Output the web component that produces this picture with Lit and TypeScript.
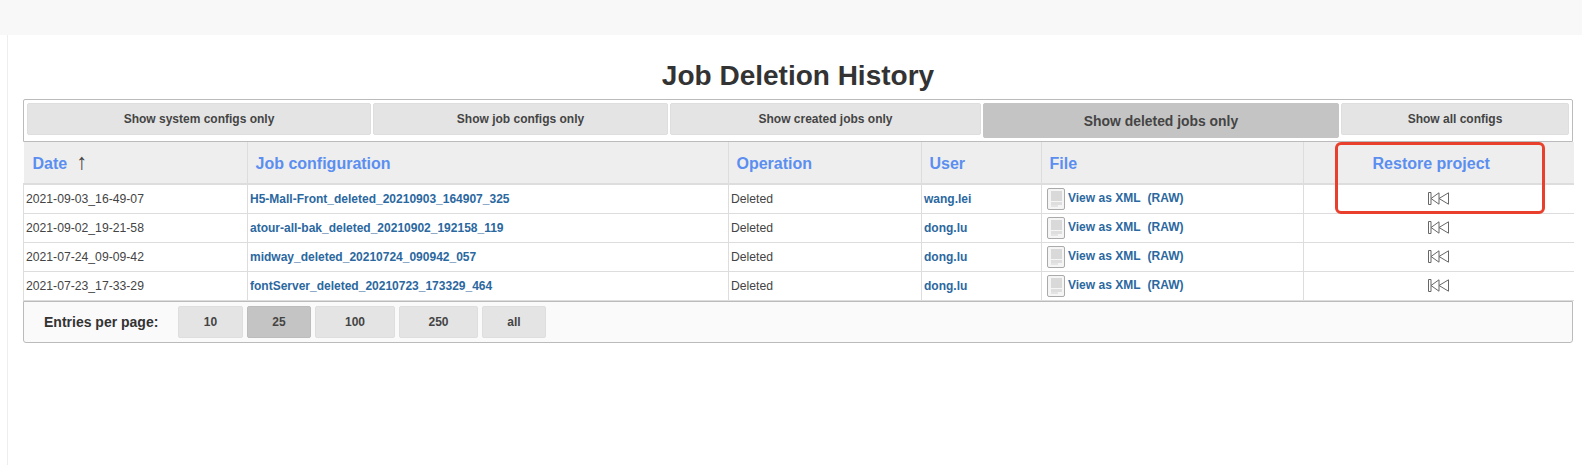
import {LitElement, html, css} from 'lit';
import {customElement} from 'lit/decorators.js';

const FILTERS = [
  {label: 'Show system configs only', width: 344},
  {label: 'Show job configs only', width: 295},
  {label: 'Show created jobs only', width: 311},
  {label: 'Show deleted jobs only', width: 356, active: true},
  {label: 'Show all configs', width: 228}
];

const COLUMNS = [224, 481, 193, 120, 262, 270];

const ROWS = [
  {date: '2021-09-03_16-49-07', job: 'H5-Mall-Front_deleted_20210903_164907_325', user: 'wang.lei'},
  {date: '2021-09-02_19-21-58', job: 'atour-all-bak_deleted_20210902_192158_119', user: 'dong.lu'},
  {date: '2021-07-24_09-09-42', job: 'midway_deleted_20210724_090942_057', user: 'dong.lu'},
  {date: '2021-07-23_17-33-29', job: 'fontServer_deleted_20210723_173329_464', user: 'dong.lu'}
];

const PAGES = [
  {label: '10', width: 65},
  {label: '25', width: 64, active: true},
  {label: '100', width: 80},
  {label: '250', width: 79},
  {label: 'all', width: 64}
];

@customElement('app-root')
export class AppRoot extends LitElement {
  static styles = css`
    :host {
      display: block;
      height: 465px;
      overflow: hidden;
      background: #fff;
      color: #333;
      font-family: "Liberation Sans", Arial, sans-serif;
    }

    .topbar {
      height: 35px;
      background: #f8f8f8;
    }

    .page {
      height: 430px;
      margin-left: 7px;
      padding: 25px 0 0 15px;
      box-sizing: border-box;
      border-left: 1px solid #eee;
    }

    .wrap {
      position: relative;
      width: 1550px;
    }

    h1 {
      margin: 0 0 7px;
      height: 32px;
      font-size: 28px;
      line-height: 32px;
      font-weight: bold;
      text-align: center;
      color: #333;
    }

    .filters {
      display: flex;
      align-items: flex-start;
      gap: 2px;
      height: 43px;
      box-sizing: border-box;
      padding: 3px;
      border: 1px solid #bbb;
      border-radius: 2px 2px 0 0;
    }

    .btn {
      box-sizing: border-box;
      height: 32px;
      line-height: 30px;
      text-align: center;
      font-size: 12px;
      font-weight: bold;
      color: #444;
      background: #e4e4e4;
      border: 1px solid #dedede;
      border-radius: 2px;
    }

    .btn.active {
      background: #c4c4c4;
      border-color: #bcbcbc;
    }

    .filters .btn.active {
      height: 35px;
      line-height: 34px;
      font-size: 13.9px;
      border-color: #c4c4c4;
    }

    table {
      table-layout: fixed;
      width: 1550px;
      border-collapse: collapse;
      font-size: 12.2px;
    }

    th {
      height: 42px;
      padding: 2px 0 0 7.5px;
      box-sizing: border-box;
      text-align: left;
      font-size: 16px;
      font-weight: bold;
      color: #5b8ef0;
      background: #eee;
      border-left: 1px solid #ddd;
      border-bottom: 2px solid #ddd;
    }

    th:first-child {
      border-left: 0;
      padding-left: 9px;
    }

    th.center {
      text-align: center;
      padding: 2px 15px 0 0;
    }

    .arrow {
      margin-left: 9px;
      color: #444;
      font-weight: normal;
      font-size: 22px;
      line-height: 0;
    }

    td {
      height: 29px;
      padding: 0 0 0 2px;
      box-sizing: border-box;
      border: 1px solid #ddd;
      border-top: 0;
      color: #444;
      white-space: nowrap;
    }

    td:last-child {
      border-right: 0;
    }

    a {
      color: #2b68a0;
      font-size: 12px;
      font-weight: bold;
      text-decoration: none;
    }

    .file {
      display: flex;
      align-items: center;
      gap: 3px;
      padding-left: 3px;
    }

    .file a {
      margin-top: -2px;
    }

    .file a.raw {
      margin-left: 4px;
    }

    .file svg {
      display: block;
    }

    td.restore {
      padding: 0 0 2px;
      text-align: center;
    }

    .restore svg {
      display: inline-block;
      vertical-align: middle;
    }

    .pager {
      display: flex;
      align-items: center;
      gap: 4px;
      height: 42px;
      box-sizing: border-box;
      padding: 0 0 0 20px;
      background: #fafafa;
      border: 1px solid #bbb;
      border-radius: 0 0 3px 3px;
    }

    .pager .label {
      width: 130px;
      font-size: 14px;
      font-weight: bold;
      color: #333;
    }

    .highlight {
      position: absolute;
      left: 1312px;
      top: 82px;
      width: 210px;
      height: 72px;
      box-sizing: border-box;
      border: 3px solid #e8402c;
      border-radius: 6px;
      pointer-events: none;
    }
  `;

  fileIcon() {
    return html`<svg width="18" height="22" viewBox="0 0 18 22">
      <rect x="0.5" y="0.5" width="17" height="21" rx="1.5" fill="#f5f5f5" stroke="#aaa"/>
      <rect x="4" y="3" width="11" height="10" fill="#d9d9d9"/>
      <rect x="4" y="14" width="11" height="3" fill="#dedede"/>
      <rect x="4" y="17" width="7" height="2" fill="#e4e4e4"/>
    </svg>`;
  }

  restoreIcon() {
    return html`<svg width="21" height="13" viewBox="0 0 21 13" fill="#fff" stroke="#666" stroke-width="1">
      <path d="M0.5 0.5h2.5v12h-2.5z"/>
      <path d="M11 0.8 3 6.5l8 5.7z"/>
      <path d="M20.5 0.8 11 6.5l9.5 5.7z"/>
    </svg>`;
  }

  render() {
    return html`
      <div class="topbar"></div>
      <div class="page">
        <div class="wrap">
          <h1>Job Deletion History</h1>
          <div class="filters">
            ${FILTERS.map((f) => html`
              <div class="btn ${f.active ? 'active' : ''}" style="width:${f.width}px">${f.label}</div>
            `)}
          </div>
          <table>
            <colgroup>${COLUMNS.map((c) => html`<col style="width:${c}px">`)}</colgroup>
            <thead>
              <tr>
                <th>Date<span class="arrow">↑</span></th>
                <th>Job configuration</th>
                <th>Operation</th>
                <th>User</th>
                <th>File</th>
                <th class="center">Restore project</th>
              </tr>
            </thead>
            <tbody>
              ${ROWS.map((r) => html`
                <tr>
                  <td>${r.date}</td>
                  <td><a href="#">${r.job}</a></td>
                  <td>Deleted</td>
                  <td><a href="#">${r.user}</a></td>
                  <td>
                    <div class="file">
                      ${this.fileIcon()}
                      <a href="#">View as XML</a>
                      <a class="raw" href="#">(RAW)</a>
                    </div>
                  </td>
                  <td class="restore">${this.restoreIcon()}</td>
                </tr>
              `)}
            </tbody>
          </table>
          <div class="pager">
            <span class="label">Entries per page:</span>
            ${PAGES.map((p) => html`
              <div class="btn ${p.active ? 'active' : ''}" style="width:${p.width}px">${p.label}</div>
            `)}
          </div>
          <div class="highlight"></div>
        </div>
      </div>
    `;
  }
}
